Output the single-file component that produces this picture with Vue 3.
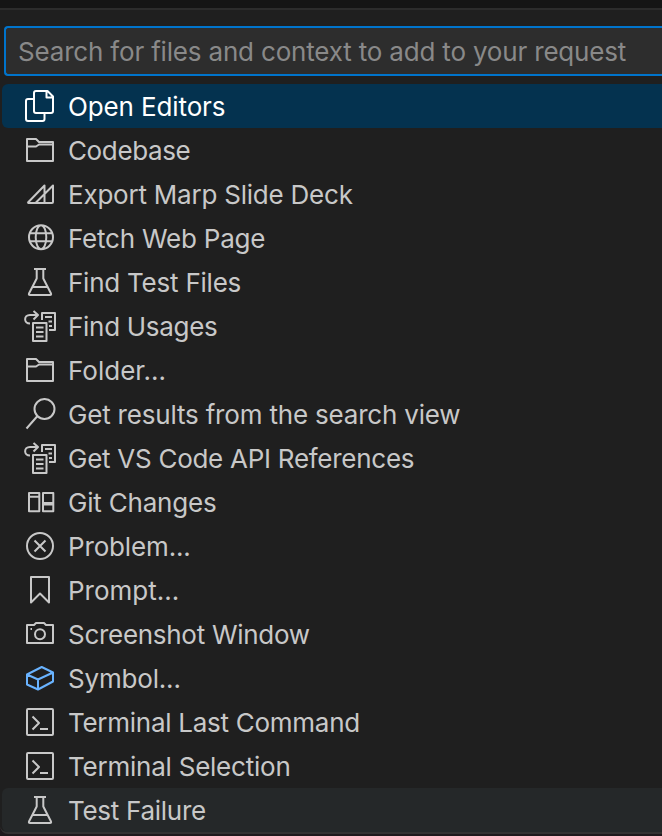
<script setup>
const items = [
  { label: 'Open Editors', icon: 'files', tracking: -0.12, state: 'selected' },
  { label: 'Codebase', icon: 'folder', tracking: -0.37 },
  { label: 'Export Marp Slide Deck', icon: 'marp', tracking: -0.22 },
  { label: 'Fetch Web Page', icon: 'globe', tracking: -0.22 },
  { label: 'Find Test Files', icon: 'beaker', tracking: -0.23 },
  { label: 'Find Usages', icon: 'references', tracking: -0.29 },
  { label: 'Folder...', icon: 'folder', tracking: 0 },
  { label: 'Get results from the search view', icon: 'magnifier', tracking: -0.19 },
  { label: 'Get VS Code API References', icon: 'references', tracking: -0.27 },
  { label: 'Git Changes', icon: 'diff', tracking: -0.2 },
  { label: 'Problem...', icon: 'error', tracking: -0.15 },
  { label: 'Prompt...', icon: 'bookmark', tracking: 0 },
  { label: 'Screenshot Window', icon: 'camera', tracking: -0.29 },
  { label: 'Symbol...', icon: 'symbol', tracking: -0.18 },
  { label: 'Terminal Last Command', icon: 'terminal', tracking: -0.27 },
  { label: 'Terminal Selection', icon: 'terminal', tracking: -0.23 },
  { label: 'Test Failure', icon: 'beaker', tracking: -0.28, state: 'hovered' },
]

const icons = {
  files: 'M12 1H23.5L29 6.5V21Q29 23 27 23H12Q10 23 10 21V3Q10 1 12 1ZM22.500 1V7.500H29M10 9H4Q2 9 2 11V29Q2 31 4 31H18.500Q20.500 31 20.500 29V23',
  folder: 'M3 5H12L15 8H29V27H3ZM3 12.500H12L15 10.500H29',
  marp: 'M3.500 25L20.500 7.500V25M11.500 25L29 7.500V24Q29 25 28 25H3.500',
  globe: 'M29 15.200A12 12 0 1 1 5 15.200A12 12 0 1 1 29 15.200M22.300 15.200A5.300 12 0 1 1 11.700 15.200A5.300 12 0 1 1 22.300 15.200M5.700 11.200H28.300M5.700 19.200H28.300',
  beaker: 'M10 3H22M12.700 3V12.500L5 27.500Q4.500 29 6 29H26Q27.500 29 27 27.500L19.300 12.500V3M8.500 21H23.500',
  references: 'M14 5H6C-0.500 5 -0.500 13.500 6 13.500M9.500 1L14 5L9.500 9.500M18 10V3H31V20H25M21 7H28M24.500 11.500H28M25 16H28M9 13H22.500V31H9ZM12 17.500H19.500M12 22H19.500M12 26.500H19.500',
  magnifier: 'M30.500 11A10 10 0 1 1 10.500 11A10 10 0 1 1 30.500 11M13.500 18L2.500 30.500',
  diff: 'M5 7H15.300V25.300H5ZM5 10.800H15.300M19 7H29.300V25.300H19ZM19 17H29.300M19 18.500H29.300',
  error: 'M29 16A13 13 0 1 1 3 16A13 13 0 1 1 29 16M10.500 10.500L21.500 21.500M21.500 10.500L10.500 21.500',
  bookmark: 'M7 3H25V28.500L16 19.500L7 28.500Z',
  camera: 'M3 7H10L12 5H20L22 7H29V25H3ZM21 16.200A5 5 0 1 1 11 16.200A5 5 0 1 1 21 16.200M6.500 11H8',
  symbol: 'M3 12.500L17.700 5L29 10.500V19.500L14 27.500L3 22.500ZM3 12.500L14 17.500L29 10.500M14 17.500V27.500',
  terminal: 'M4 3H28Q29 3 29 4V28Q29 29 28 29H4Q3 29 3 28V4Q3 3 4 3ZM8.500 10.500L15 17L8.500 23.500M16 23H24',
}
</script>

<template>
  <main class="picker">
    <div class="backdrop"></div>
    <section class="panel">
      <div class="search">Search for files and context to add to your request</div>
      <ul class="list">
        <li v-for="item in items" :key="item.label" class="row" :class="item.state">
          <svg class="icon" :class="`icon-${item.icon}`" viewBox="0 0 32 32">
            <path :d="icons[item.icon]" />
          </svg>
          <span class="label" :style="{ letterSpacing: `${item.tracking}px` }">{{ item.label }}</span>
        </li>
      </ul>
    </section>
  </main>
</template>

<style>
body {
  background: #1f191c;
}
</style>

<style scoped>
.picker {
  height: 836px;
  overflow: hidden;
  font-family: Inter, "Liberation Sans", sans-serif;
  font-size: 26px;
  color: #c8c8c8;
}
.backdrop {
  height: 8px;
  background: #151515;
}
.panel {
  box-sizing: border-box;
  height: 826px;
  padding-top: 16px;
  background: #1f1f1f;
  border-top: 2px solid #2c2c2c;
  border-bottom: 2px solid #343232;
  border-bottom-left-radius: 8px;
}
.search {
  box-sizing: border-box;
  height: 50px;
  margin-left: 4px;
  padding-left: 12px;
  border: 2px solid #0074cc;
  border-right: 0;
  border-radius: 4px 0 0 4px;
  background: #2d2d2d;
  color: #898989;
  line-height: 48px;
  letter-spacing: -0.18px;
  white-space: nowrap;
}
.list {
  margin: 8px 0 0 2px;
  padding: 0;
  list-style: none;
}
.row {
  display: flex;
  align-items: center;
  gap: 12px;
  height: 44px;
  padding-left: 22px;
  border-radius: 6px 0 0 6px;
}
.selected {
  background: #04324f;
  color: #ffffff;
}
.hovered {
  background: #252829;
}
.icon {
  flex: none;
  width: 32px;
  height: 32px;
  fill: none;
  stroke: currentColor;
  stroke-width: 2;
  stroke-linejoin: round;
}
.icon-symbol {
  color: #69b3ff;
}
.label {
  line-height: 44px;
  padding-top: 2px;
  white-space: nowrap;
}
</style>
